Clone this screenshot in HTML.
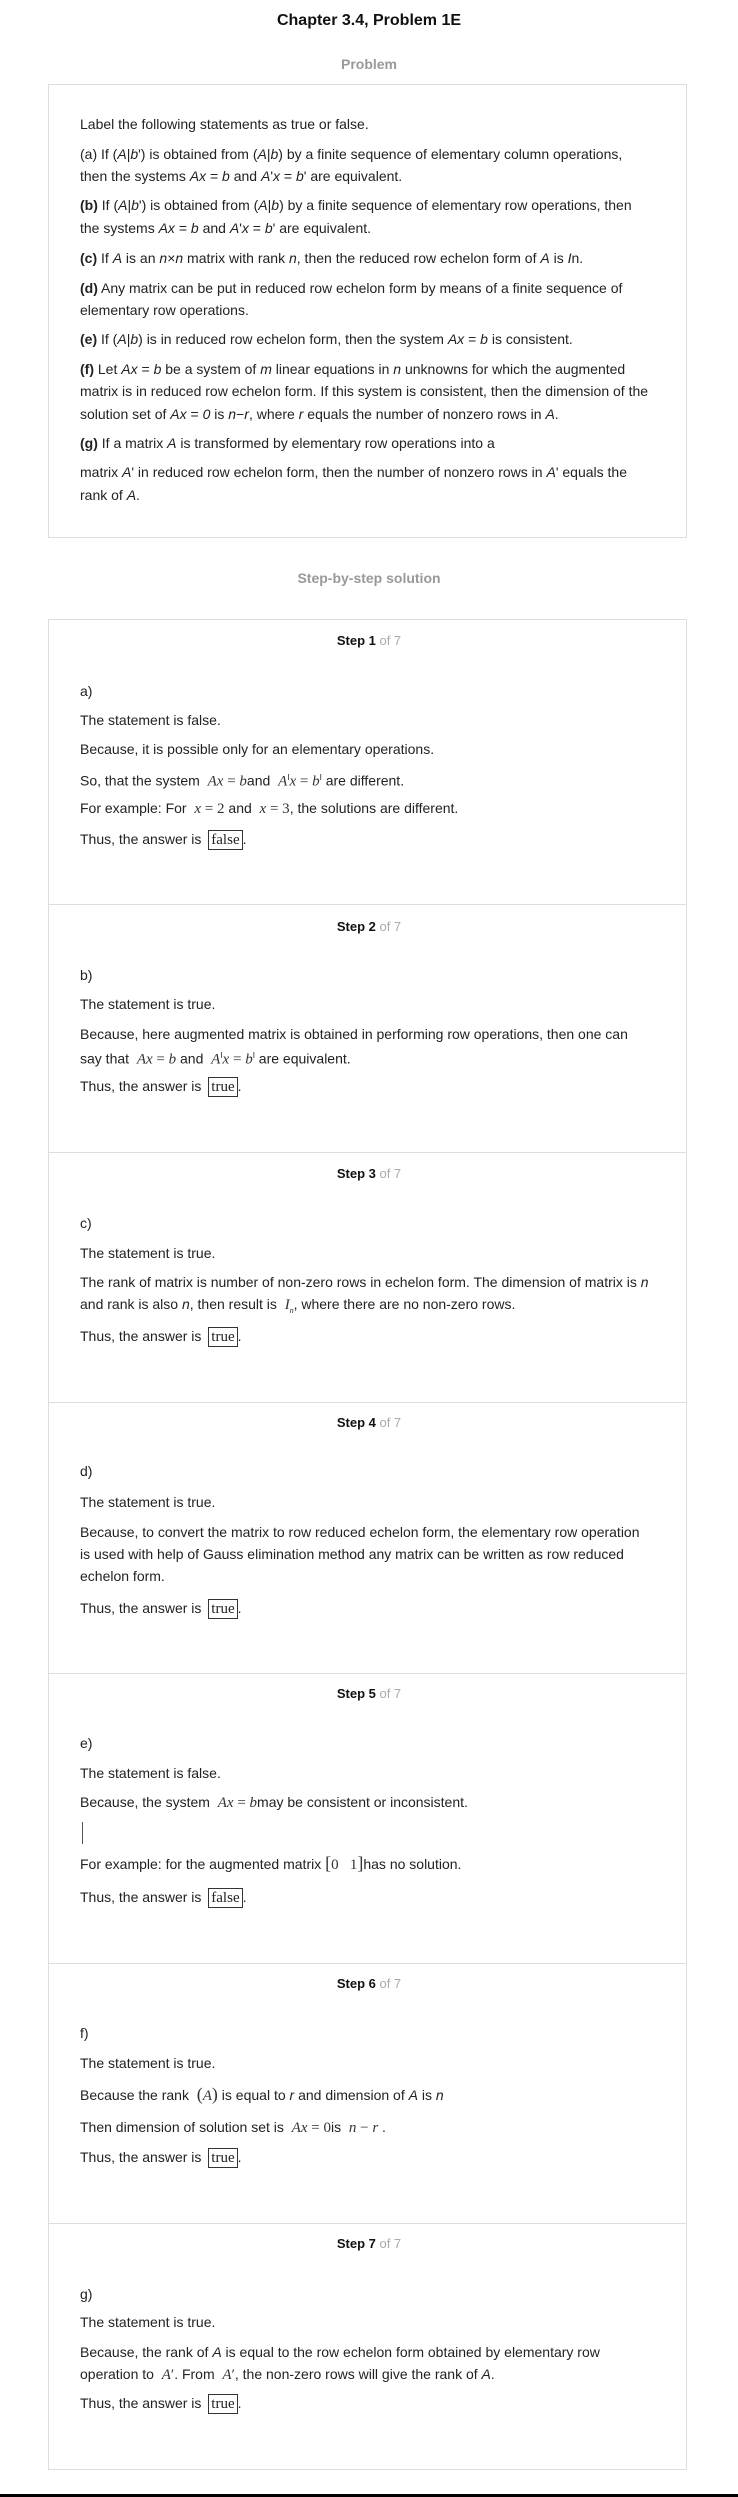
<!DOCTYPE html>
<html><head><meta charset="utf-8"><style>
body{margin:0;background:#fff;width:738px;height:2497px;position:relative;font-family:"Liberation Sans",Arial,sans-serif;font-size:14px;color:#222;overflow:hidden}
.l{position:absolute;left:80px;line-height:22px;white-space:nowrap}
.c{position:absolute;left:0;width:738px;text-align:center;line-height:22px}
.box{position:absolute;left:48px;width:639px;border:1px solid #ddd;box-sizing:border-box}
.hr{position:absolute;left:48px;width:639px;height:1px;background:#ddd}
.sh{font-weight:bold;font-size:13px;color:#111}
.sh span{font-weight:normal;color:#aaa}
.m{font-family:"Liberation Serif",serif;font-style:italic;font-size:15px;color:#333}
.mn{font-family:"Liberation Serif",serif;font-size:15px;color:#333}
.ans{font-family:"Liberation Serif",serif;font-size:15px;border:1px solid #333;padding:0 2px;display:inline-block;line-height:18px;margin-left:3px}
i{font-style:italic}
</style></head><body>
<div class="c" style="top:10px;font-weight:bold;font-size:16px;color:#111">Chapter 3.4, Problem 1E</div>
<div class="c" style="top:53px;font-weight:bold;font-size:14px;color:#999">Problem</div>
<div class="box" style="top:84px;height:454px"></div>
<div class="l" style="top:113px">Label the following statements as true or false.</div>
<div class="l" style="top:143px">(a) If (<i>A</i>|<i>b</i>ʹ) is obtained from (<i>A</i>|<i>b</i>) by a finite sequence of elementary column operations,</div>
<div class="l" style="top:165px">then the systems <i>Ax</i> = <i>b</i> and <i>A</i>ʹ<i>x</i> = <i>b</i>ʹ are equivalent.</div>
<div class="l" style="top:194px"><b>(b)</b> If (<i>A</i>|<i>b</i>ʹ) is obtained from (<i>A</i>|<i>b</i>) by a finite sequence of elementary row operations, then</div>
<div class="l" style="top:217px">the systems <i>Ax</i> = <i>b</i> and <i>A</i>ʹ<i>x</i> = <i>b</i>ʹ are equivalent.</div>
<div class="l" style="top:247px"><b>(c)</b> If <i>A</i> is an <i>n</i>×<i>n</i> matrix with rank <i>n</i>, then the reduced row echelon form of <i>A</i> is <i>I</i>n.</div>
<div class="l" style="top:277px"><b>(d)</b> Any matrix can be put in reduced row echelon form by means of a finite sequence of</div>
<div class="l" style="top:299px">elementary row operations.</div>
<div class="l" style="top:328px"><b>(e)</b> If (<i>A</i>|<i>b</i>) is in reduced row echelon form, then the system <i>Ax</i> = <i>b</i> is consistent.</div>
<div class="l" style="top:358px"><b>(f)</b> Let <i>Ax</i> = <i>b</i> be a system of <i>m</i> linear equations in <i>n</i> unknowns for which the augmented</div>
<div class="l" style="top:380px">matrix is in reduced row echelon form. If this system is consistent, then the dimension of the</div>
<div class="l" style="top:403px">solution set of <i>Ax</i> = <i>0</i> is <i>n</i>−<i>r</i>, where <i>r</i> equals the number of nonzero rows in <i>A</i>.</div>
<div class="l" style="top:432px"><b>(g)</b> If a matrix <i>A</i> is transformed by elementary row operations into a</div>
<div class="l" style="top:461px">matrix <i>A</i>ʹ in reduced row echelon form, then the number of nonzero rows in <i>A</i>ʹ equals the</div>
<div class="l" style="top:484px">rank of <i>A</i>.</div>

<div class="c" style="top:567px;font-weight:bold;font-size:14px;color:#999">Step-by-step solution</div>
<div class="box" style="top:619px;height:1851px"></div>
<div class="hr" style="top:904px"></div>
<div class="hr" style="top:1152px"></div>
<div class="hr" style="top:1402px"></div>
<div class="hr" style="top:1673px"></div>
<div class="hr" style="top:1963px"></div>
<div class="hr" style="top:2223px"></div>

<div class="c sh" style="top:630px">Step 1 <span>of 7</span></div>
<div class="l" style="top:680px">a)</div>
<div class="l" style="top:709px">The statement is false.</div>
<div class="l" style="top:738px">Because, it is possible only for an elementary operations.</div>
<div class="l" style="top:767px">So, that the system &nbsp;<span class="m">Ax</span><span class="mn"> = </span><span class="m">b</span>and &nbsp;<span class="m">A</span><sup style="font-size:8px">I</sup><span class="m">x</span><span class="mn"> = </span><span class="m">b</span><sup style="font-size:8px">I</sup> are different.</div>
<div class="l" style="top:797px">For example: For &nbsp;<span class="m">x</span><span class="mn"> = 2</span> and &nbsp;<span class="m">x</span><span class="mn"> = 3</span>, the solutions are different.</div>
<div class="l" style="top:828px">Thus, the answer is <span class="ans">false</span>.</div>

<div class="c sh" style="top:916px">Step 2 <span>of 7</span></div>
<div class="l" style="top:964px">b)</div>
<div class="l" style="top:993px">The statement is true.</div>
<div class="l" style="top:1023px">Because, here augmented matrix is obtained in performing row operations, then one can</div>
<div class="l" style="top:1045px">say that &nbsp;<span class="m">Ax</span><span class="mn"> = </span><span class="m">b</span> and &nbsp;<span class="m">A</span><sup style="font-size:8px">I</sup><span class="m">x</span><span class="mn"> = </span><span class="m">b</span><sup style="font-size:8px">I</sup> are equivalent.</div>
<div class="l" style="top:1075px">Thus, the answer is <span class="ans">true</span>.</div>

<div class="c sh" style="top:1163px">Step 3 <span>of 7</span></div>
<div class="l" style="top:1212px">c)</div>
<div class="l" style="top:1242px">The statement is true.</div>
<div class="l" style="top:1271px">The rank of matrix is number of non-zero rows in echelon form. The dimension of matrix is <i>n</i></div>
<div class="l" style="top:1293px">and rank is also <i>n</i>, then result is &nbsp;<span class="m">I</span><sub style="font-size:7px"><i>n</i></sub>, where there are no non-zero rows.</div>
<div class="l" style="top:1325px">Thus, the answer is <span class="ans">true</span>.</div>

<div class="c sh" style="top:1412px">Step 4 <span>of 7</span></div>
<div class="l" style="top:1460px">d)</div>
<div class="l" style="top:1491px">The statement is true.</div>
<div class="l" style="top:1521px">Because, to convert the matrix to row reduced echelon form, the elementary row operation</div>
<div class="l" style="top:1543px">is used with help of Gauss elimination method any matrix can be written as row reduced</div>
<div class="l" style="top:1565px">echelon form.</div>
<div class="l" style="top:1597px">Thus, the answer is <span class="ans">true</span>.</div>

<div class="c sh" style="top:1683px">Step 5 <span>of 7</span></div>
<div class="l" style="top:1732px">e)</div>
<div class="l" style="top:1762px">The statement is false.</div>
<div class="l" style="top:1791px">Because, the system &nbsp;<span class="m">Ax</span><span class="mn"> = </span><span class="m">b</span>may be consistent or inconsistent.</div>
<div style="position:absolute;left:82px;top:1822px;width:1px;height:22px;background:#555"></div>
<div class="l" style="top:1852px">For example: for the augmented matrix <span class="mn" style="font-size:18px">[</span><span class="mn">0 &nbsp;&nbsp;1</span><span class="mn" style="font-size:18px">]</span>has no solution.</div>
<div class="l" style="top:1886px">Thus, the answer is <span class="ans">false</span>.</div>

<div class="c sh" style="top:1973px">Step 6 <span>of 7</span></div>
<div class="l" style="top:2022px">f)</div>
<div class="l" style="top:2052px">The statement is true.</div>
<div class="l" style="top:2083px">Because the rank &nbsp;<span class="mn" style="font-size:18px">(</span><span class="m">A</span><span class="mn" style="font-size:18px">)</span> is equal to <i>r</i> and dimension of <i>A</i> is <i>n</i></div>
<div class="l" style="top:2116px">Then dimension of solution set is &nbsp;<span class="m">Ax</span><span class="mn"> = 0</span>is &nbsp;<span class="m">n</span><span class="mn"> − </span><span class="m">r</span> .</div>
<div class="l" style="top:2146px">Thus, the answer is <span class="ans">true</span>.</div>

<div class="c sh" style="top:2233px">Step 7 <span>of 7</span></div>
<div class="l" style="top:2283px">g)</div>
<div class="l" style="top:2311px">The statement is true.</div>
<div class="l" style="top:2341px">Because, the rank of <i>A</i> is equal to the row echelon form obtained by elementary row</div>
<div class="l" style="top:2363px">operation to &nbsp;<span class="m">A</span><span class="mn">′</span>. From &nbsp;<span class="m">A</span><span class="mn">′</span>, the non-zero rows will give the rank of <i>A</i>.</div>
<div class="l" style="top:2392px">Thus, the answer is <span class="ans">true</span>.</div>

<div style="position:absolute;left:0;top:2494px;width:738px;height:3px;background:#000"></div>
</body></html>
